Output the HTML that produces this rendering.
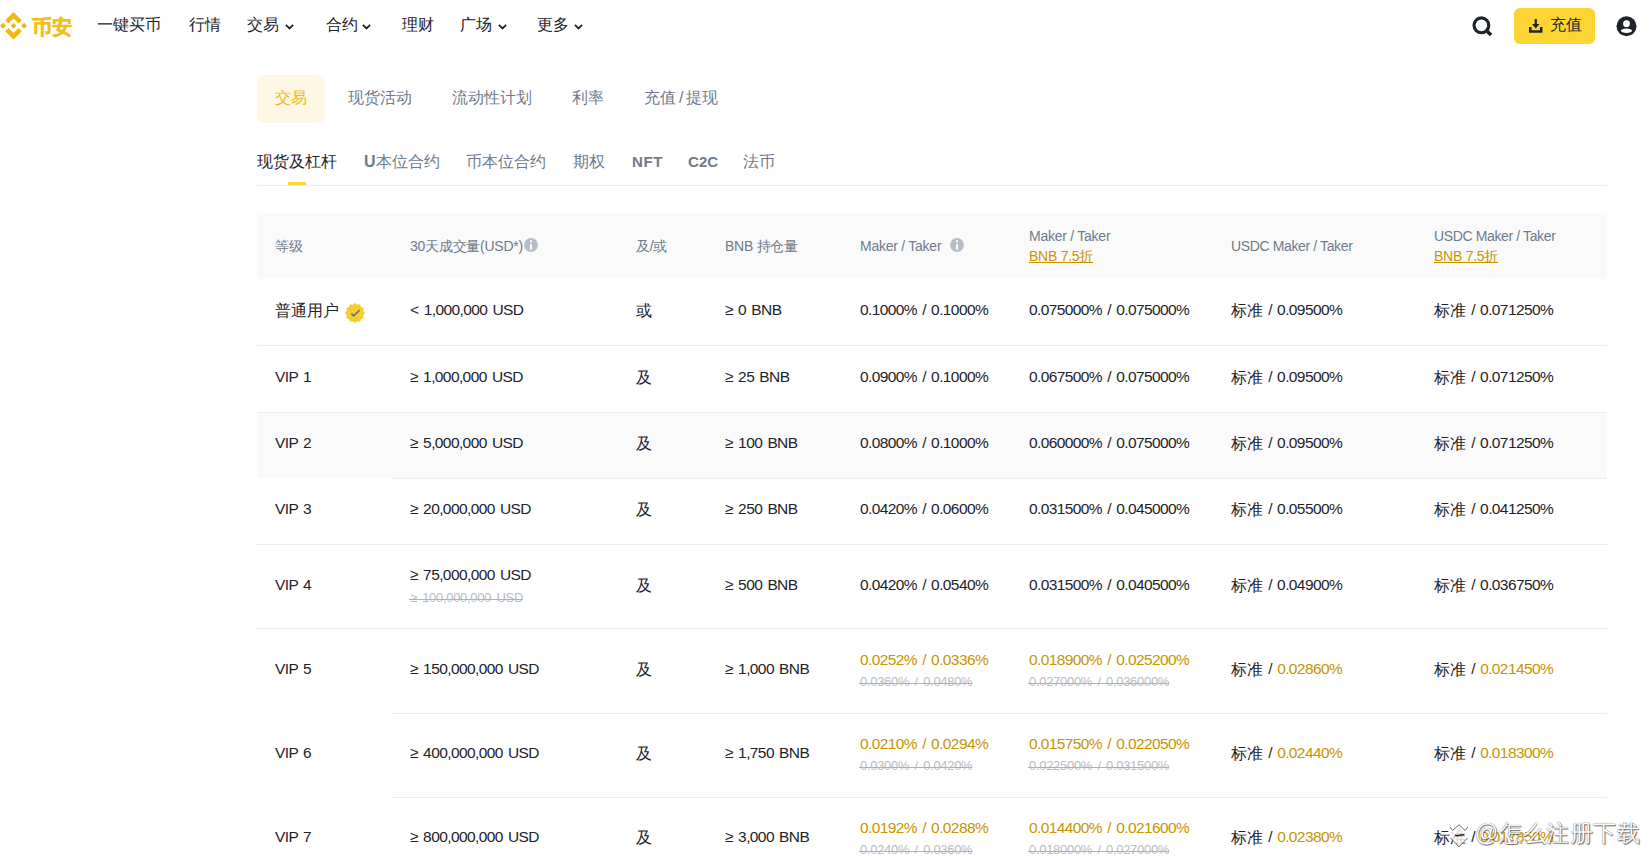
<!DOCTYPE html>
<html><head><meta charset="utf-8">
<style>
*{margin:0;padding:0;box-sizing:border-box}
html,body{width:1651px;height:856px;overflow:hidden;background:#fff;font-family:"Liberation Sans",sans-serif;color:#1E2329}
.abs{position:absolute;white-space:nowrap}
.nav{font-size:16px;color:#1E2329;top:15px;line-height:20px}
.chev{position:absolute;width:9px;height:6px;top:8.5px}
.t1{font-size:16px;color:#707A8A;top:88px;line-height:20px}
.t2{font-size:16px;color:#707A8A;top:152px;line-height:20px}
.hd{font-size:14px;color:#707A8A;line-height:20px;letter-spacing:-0.25px}
.cell{font-size:15.5px;color:#1E2329;line-height:20px;letter-spacing:-0.6px;word-spacing:1.5px}
.cell .c{font-size:16px;letter-spacing:0;position:relative;top:1px}
.y{color:#C99400}
.strike{font-size:13px;color:#B7BDC6;line-height:16px;letter-spacing:-0.3px;word-spacing:2px}
.strike::after{content:"";position:absolute;left:-1px;right:0;top:9px;height:1px;background:#A9B0BA}
.hl{position:absolute;height:1px;background:#EAECEF}
.info{display:inline-block;width:13px;height:13px;vertical-align:middle;margin-left:4px;margin-top:-2px}
.badge{display:inline-block;width:20px;height:20px;vertical-align:middle;margin-left:8px;margin-top:-2px}
.ul{color:#C99400;text-decoration:underline}
</style></head><body>
<!-- logo -->
<svg class="abs" style="left:0;top:0" width="30" height="44" viewBox="0 0 30 44"><g fill="#F0B90B">
<path d="M13.5 12 L21.8 20.3 L18.6 23.5 L13.5 18.6 L8.4 23.5 L5.2 20.3 Z"/>
<path d="M13.5 39.6 L21.8 31.3 L18.6 28.1 L13.5 33 L8.4 28.1 L5.2 31.3 Z"/>
<path d="M13.5 22.9 L16.4 25.8 L13.5 28.7 L10.6 25.8 Z"/>
<path d="M3 22.8 L6 25.8 L3 28.8 L0 25.8 Z"/>
<path d="M24 22.8 L27 25.8 L24 28.8 L21 25.8 Z"/>
</g></svg>
<div class="abs" style="left:32px;top:14.5px;font-size:19.5px;font-weight:bold;color:#F2BF1E;line-height:24px;-webkit-text-stroke:0.6px #F2BF1E;letter-spacing:-0.5px">币安</div>

<div class="abs nav" style="left:97px">一键买币</div>
<div class="abs nav" style="left:189px">行情</div>
<div class="abs nav" style="left:247px">交易<svg class="chev" style="left:38px" viewBox="0 0 9 6"><path d="M0.9 0.9 L4.5 4.4 L8.1 0.9" stroke="#1E2329" stroke-width="1.8" fill="none"/></svg></div>
<div class="abs nav" style="left:326px">合约<svg class="chev" style="left:36px" viewBox="0 0 9 6"><path d="M0.9 0.9 L4.5 4.4 L8.1 0.9" stroke="#1E2329" stroke-width="1.8" fill="none"/></svg></div>
<div class="abs nav" style="left:402px">理财</div>
<div class="abs nav" style="left:460px">广场<svg class="chev" style="left:38px" viewBox="0 0 9 6"><path d="M0.9 0.9 L4.5 4.4 L8.1 0.9" stroke="#1E2329" stroke-width="1.8" fill="none"/></svg></div>
<div class="abs nav" style="left:537px">更多<svg class="chev" style="left:37px" viewBox="0 0 9 6"><path d="M0.9 0.9 L4.5 4.4 L8.1 0.9" stroke="#1E2329" stroke-width="1.8" fill="none"/></svg></div>

<!-- right icons -->
<svg class="abs" style="left:1470px;top:14px" width="24" height="24" viewBox="0 0 24 24"><circle cx="11.4" cy="11.3" r="7.4" stroke="#1E2329" stroke-width="3.1" fill="none"/><path d="M16 16 L21 21" stroke="#1E2329" stroke-width="3.6"/></svg>
<div class="abs" style="left:1514px;top:8px;width:81px;height:36px;background:#FCD535;border-radius:6px"></div>
<svg class="abs" style="left:1529px;top:18px" width="14" height="16" viewBox="0 0 14 16"><path d="M6.75 1 V7" stroke="#1E2329" stroke-width="2.2"/><path d="M3 6 H10.5 L6.75 10.4 Z" fill="#1E2329"/><path d="M1.3 9 V13.6 H12.2 V9" stroke="#1E2329" stroke-width="2.5" fill="none"/></svg>
<div class="abs" style="left:1550px;top:15px;font-size:16px;line-height:20px;color:#1E2329">充值</div>
<svg class="abs" style="left:1616px;top:16px" width="21" height="21" viewBox="0 0 21 21"><circle cx="10.5" cy="10.3" r="10" fill="#1E2329"/><circle cx="10.5" cy="7.7" r="3.4" fill="#fff"/><ellipse cx="10.5" cy="14.8" rx="5.6" ry="2.2" fill="#fff"/></svg>

<!-- tabs row 1 -->
<div class="abs" style="left:257px;top:75px;width:68px;height:48px;background:#FDF7E3;border-radius:8px"></div>
<div class="abs t1" style="left:275px;color:#F0B90B">交易</div>
<div class="abs t1" style="left:348px">现货活动</div>
<div class="abs t1" style="left:452px">流动性计划</div>
<div class="abs t1" style="left:572px">利率</div>
<div class="abs t1" style="left:644px">充值<span style="margin:0 3px">/</span>提现</div>

<!-- tabs row 2 -->
<div class="abs t2" style="left:257px;color:#1E2329">现货及杠杆</div>
<div class="abs" style="left:288px;top:182px;width:18px;height:3px;background:#FCD535"></div>
<div class="abs t2" style="left:364px"><b>U</b>本位合约</div>
<div class="abs t2" style="left:466px">币本位合约</div>
<div class="abs t2" style="left:573px">期权</div>
<div class="abs t2" style="left:632px;font-weight:bold;font-size:15px;letter-spacing:0.6px">NFT</div>
<div class="abs t2" style="left:688px;font-weight:bold;font-size:15px;letter-spacing:0.1px">C2C</div>
<div class="abs t2" style="left:743px">法币</div>
<div class="hl" style="left:257px;top:185px;width:1350px"></div>

<!-- table -->
<div class="abs" style="left:257px;top:213px;width:1350px;height:66px;background:#FAFAFA"></div>
<div class="abs" style="left:257px;top:412px;width:1350px;height:66px;background:#FAFAFA"></div>
<div class="hl" style="left:257px;top:345px;width:1350px"></div>
<div class="hl" style="left:257px;top:412px;width:1350px"></div>
<div class="hl" style="left:392px;top:478px;width:1215px"></div>
<div class="hl" style="left:257px;top:544px;width:1350px"></div>
<div class="hl" style="left:257px;top:628px;width:1350px"></div>
<div class="hl" style="left:392px;top:713px;width:1215px"></div>
<div class="hl" style="left:392px;top:797px;width:1215px"></div>

<div id="tbl"><div class="abs hd" style="left:275px;top:236px">等级</div>
<div class="abs hd" style="left:410px;top:236px">30天成交量(USD*)</div>
<svg class="abs" style="left:524px;top:238px" width="14" height="14" viewBox="0 0 14 14"><circle cx="7" cy="7" r="6.9" fill="#B7BDC6"/><rect x="6" y="2.3" width="2" height="2.1" fill="#fff"/><rect x="6" y="6.2" width="2" height="5.4" fill="#fff"/></svg>
<div class="abs hd" style="left:636px;top:236px">及/或</div>
<div class="abs hd" style="left:725px;top:236px">BNB 持仓量</div>
<div class="abs hd" style="left:860px;top:236px">Maker / Taker</div>
<svg class="abs" style="left:950px;top:238px" width="14" height="14" viewBox="0 0 14 14"><circle cx="7" cy="7" r="6.9" fill="#B7BDC6"/><rect x="6" y="2.3" width="2" height="2.1" fill="#fff"/><rect x="6" y="6.2" width="2" height="5.4" fill="#fff"/></svg>
<div class="abs hd" style="left:1029px;top:226px">Maker / Taker</div>
<div class="abs hd" style="left:1029px;top:246px"><span class="ul">BNB 7.5折</span></div>
<div class="abs hd" style="left:1231px;top:236px"><span style="letter-spacing:-0.37px">USDC Maker / Taker</span></div>
<div class="abs hd" style="left:1434px;top:226px"><span style="letter-spacing:-0.37px">USDC Maker / Taker</span></div>
<div class="abs hd" style="left:1434px;top:246px"><span class="ul">BNB 7.5折</span></div>
<svg class="abs" style="left:345px;top:303px" width="20" height="20" viewBox="0 0 20 20"><polygon fill="#F8CD2E" points="10.00,0.00 12.23,1.69 15.00,1.34 16.08,3.92 18.66,5.00 18.31,7.77 20.00,10.00 18.31,12.23 18.66,15.00 16.08,16.08 15.00,18.66 12.23,18.31 10.00,20.00 7.77,18.31 5.00,18.66 3.92,16.08 1.34,15.00 1.69,12.23 0.00,10.00 1.69,7.77 1.34,5.00 3.92,3.92 5.00,1.34 7.77,1.69"/><path d="M6.4 10.4 L8.6 12.9 L14.6 7.3" stroke="#5E6B8A" stroke-width="1.5" fill="none"/></svg>
<div class="abs cell" style="left:275px;top:300px"><span class="c">普通用户</span></div>
<div class="abs cell" style="left:410px;top:300px">< 1,000,000 USD</div>
<div class="abs cell" style="left:636px;top:300px"><span class="c">或</span></div>
<div class="abs cell" style="left:725px;top:300px">≥ 0 BNB</div>
<div class="abs cell" style="left:860px;top:300px">0.1000% / 0.1000%</div>
<div class="abs cell" style="left:1029px;top:300px">0.075000% / 0.075000%</div>
<div class="abs cell" style="left:1231px;top:300px"><span class="c">标准</span> / 0.09500%</div>
<div class="abs cell" style="left:1434px;top:300px"><span class="c">标准</span> / 0.071250%</div>
<div class="abs cell" style="left:275px;top:367px">VIP 1</div>
<div class="abs cell" style="left:410px;top:367px">≥ 1,000,000 USD</div>
<div class="abs cell" style="left:636px;top:367px"><span class="c">及</span></div>
<div class="abs cell" style="left:725px;top:367px">≥ 25 BNB</div>
<div class="abs cell" style="left:860px;top:367px">0.0900% / 0.1000%</div>
<div class="abs cell" style="left:1029px;top:367px">0.067500% / 0.075000%</div>
<div class="abs cell" style="left:1231px;top:367px"><span class="c">标准</span> / 0.09500%</div>
<div class="abs cell" style="left:1434px;top:367px"><span class="c">标准</span> / 0.071250%</div>
<div class="abs cell" style="left:275px;top:433px">VIP 2</div>
<div class="abs cell" style="left:410px;top:433px">≥ 5,000,000 USD</div>
<div class="abs cell" style="left:636px;top:433px"><span class="c">及</span></div>
<div class="abs cell" style="left:725px;top:433px">≥ 100 BNB</div>
<div class="abs cell" style="left:860px;top:433px">0.0800% / 0.1000%</div>
<div class="abs cell" style="left:1029px;top:433px">0.060000% / 0.075000%</div>
<div class="abs cell" style="left:1231px;top:433px"><span class="c">标准</span> / 0.09500%</div>
<div class="abs cell" style="left:1434px;top:433px"><span class="c">标准</span> / 0.071250%</div>
<div class="abs cell" style="left:275px;top:499px">VIP 3</div>
<div class="abs cell" style="left:410px;top:499px">≥ 20,000,000 USD</div>
<div class="abs cell" style="left:636px;top:499px"><span class="c">及</span></div>
<div class="abs cell" style="left:725px;top:499px">≥ 250 BNB</div>
<div class="abs cell" style="left:860px;top:499px">0.0420% / 0.0600%</div>
<div class="abs cell" style="left:1029px;top:499px">0.031500% / 0.045000%</div>
<div class="abs cell" style="left:1231px;top:499px"><span class="c">标准</span> / 0.05500%</div>
<div class="abs cell" style="left:1434px;top:499px"><span class="c">标准</span> / 0.041250%</div>
<div class="abs cell" style="left:275px;top:575px">VIP 4</div>
<div class="abs cell" style="left:410px;top:565px">≥ 75,000,000 USD</div>
<div class="abs strike" style="left:410px;top:590px">≥ 100,000,000 USD</div>
<div class="abs cell" style="left:636px;top:575px"><span class="c">及</span></div>
<div class="abs cell" style="left:725px;top:575px">≥ 500 BNB</div>
<div class="abs cell" style="left:860px;top:575px">0.0420% / 0.0540%</div>
<div class="abs cell" style="left:1029px;top:575px">0.031500% / 0.040500%</div>
<div class="abs cell" style="left:1231px;top:575px"><span class="c">标准</span> / 0.04900%</div>
<div class="abs cell" style="left:1434px;top:575px"><span class="c">标准</span> / 0.036750%</div>
<div class="abs cell" style="left:275px;top:659px">VIP 5</div>
<div class="abs cell" style="left:410px;top:659px">≥ 150,000,000 USD</div>
<div class="abs cell" style="left:636px;top:659px"><span class="c">及</span></div>
<div class="abs cell" style="left:725px;top:659px">≥ 1,000 BNB</div>
<div class="abs cell" style="left:860px;top:650px"><span class="y">0.0252% / 0.0336%</span></div>
<div class="abs strike" style="left:860px;top:674px">0.0360% / 0.0480%</div>
<div class="abs cell" style="left:1029px;top:650px"><span class="y">0.018900% / 0.025200%</span></div>
<div class="abs strike" style="left:1029px;top:674px">0.027000% / 0.036000%</div>
<div class="abs cell" style="left:1231px;top:659px"><span class="c">标准</span> / <span class="y">0.02860%</span></div>
<div class="abs cell" style="left:1434px;top:659px"><span class="c">标准</span> / <span class="y">0.021450%</span></div>
<div class="abs cell" style="left:275px;top:743px">VIP 6</div>
<div class="abs cell" style="left:410px;top:743px">≥ 400,000,000 USD</div>
<div class="abs cell" style="left:636px;top:743px"><span class="c">及</span></div>
<div class="abs cell" style="left:725px;top:743px">≥ 1,750 BNB</div>
<div class="abs cell" style="left:860px;top:734px"><span class="y">0.0210% / 0.0294%</span></div>
<div class="abs strike" style="left:860px;top:758px">0.0300% / 0.0420%</div>
<div class="abs cell" style="left:1029px;top:734px"><span class="y">0.015750% / 0.022050%</span></div>
<div class="abs strike" style="left:1029px;top:758px">0.022500% / 0.031500%</div>
<div class="abs cell" style="left:1231px;top:743px"><span class="c">标准</span> / <span class="y">0.02440%</span></div>
<div class="abs cell" style="left:1434px;top:743px"><span class="c">标准</span> / <span class="y">0.018300%</span></div>
<div class="abs cell" style="left:275px;top:827px">VIP 7</div>
<div class="abs cell" style="left:410px;top:827px">≥ 800,000,000 USD</div>
<div class="abs cell" style="left:636px;top:827px"><span class="c">及</span></div>
<div class="abs cell" style="left:725px;top:827px">≥ 3,000 BNB</div>
<div class="abs cell" style="left:860px;top:818px"><span class="y">0.0192% / 0.0288%</span></div>
<div class="abs strike" style="left:860px;top:842px">0.0240% / 0.0360%</div>
<div class="abs cell" style="left:1029px;top:818px"><span class="y">0.014400% / 0.021600%</span></div>
<div class="abs strike" style="left:1029px;top:842px">0.018000% / 0.027000%</div>
<div class="abs cell" style="left:1231px;top:827px"><span class="c">标准</span> / <span class="y">0.02380%</span></div>
<div class="abs cell" style="left:1434px;top:827px"><span class="c">标准</span> / <span class="y">0.017850%</span></div></div><!--end-->
<!--wm-->
<svg class="abs" style="left:1446px;top:821px" width="26" height="30" viewBox="0 0 26 30"><path d="M4 6 L6.6 9.5 L13 3.8 L19.2 9.5 L21.8 6 L22 17 L13 25.8 L4.6 17 Z" fill="rgba(255,255,255,.8)"/><path d="M4 6 L6.6 9.5 L13 3.8 L19.2 9.5 L21.8 6 M4.6 17 L13 25.8 L21.5 17" fill="none" stroke="#555" stroke-width="0.9"/><path d="M9 13.8 Q11 15.3 13.5 14.3 L18.5 13.8" stroke="#1E2329" stroke-width="1.5" fill="none"/></svg>
<div class="abs" style="left:1475px;top:820px;font-size:23px;line-height:26px;letter-spacing:0.6px;color:#fff;text-shadow:0 0 0.8px rgba(0,0,0,.75),0.8px 0.8px 1px rgba(0,0,0,.55)">@怎么注册下载</div>
<!--/wm-->
</body></html>
